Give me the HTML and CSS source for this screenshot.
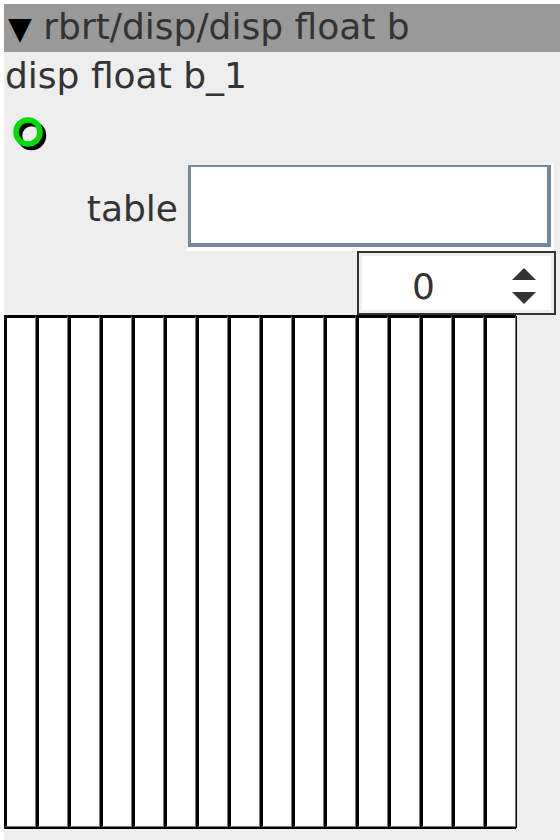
FILE: index.html
```html
<!DOCTYPE html>
<html lang="en">
<head>
    <meta charset="UTF-8">
    <meta name="viewport" content="width=device-width, initial-scale=1.0">
    <link rel="stylesheet" href="styles.css">
    <title>rbrt/disp/disp float b</title>
</head>
<body>
    <div class="panel">
        <div class="panel-head"><span class="arrow">&#9660;</span> rbrt/disp/disp float b</div>
        <div class="title">disp float b_1</div>

        <div class="status">
            <svg width="44" height="44" viewBox="0 0 44 44">
                <circle cx="18.5" cy="18.5" r="12" fill="none" stroke="#000" stroke-width="5.5"/>
                <circle cx="15" cy="15" r="12" fill="none" stroke="#00dd00" stroke-width="5.5"/>
            </svg>
        </div>

        <div class="field">
            <label for="table">table</label>
            <div class="field-box"><input type="text" id="table" name="table"></div>
        </div>

        <div class="spin-row">
            <div class="spin">
                <span class="spin-value">0</span>
                <span class="spin-arrows">
                    <span class="up"></span>
                    <span class="down"></span>
                </span>
            </div>
        </div>

        <div class="bars">
            <div class="bar"></div><div class="bar"></div><div class="bar"></div><div class="bar"></div>
            <div class="bar"></div><div class="bar"></div><div class="bar"></div><div class="bar"></div>
            <div class="bar"></div><div class="bar"></div><div class="bar"></div><div class="bar"></div>
            <div class="bar"></div><div class="bar"></div><div class="bar"></div><div class="bar"></div>
        </div>
    </div>
</body>
</html>
```

FILE: styles.css
```css
body {
    margin: 4px 0 0 4px;
    background: #fff;
    font-family: 'DejaVu Sans', Verdana, sans-serif;
    color: #333;
    overflow: hidden;
}

.panel {
    background: #eee;
    height: 840px;
    display: flex;
    flex-direction: column;
}

.panel-head {
    background: #999;
    height: 48px;
    line-height: 46px;
    font-size: 36px;
    padding-left: 4px;
    white-space: nowrap;
}

.arrow {
    color: #000;
    font-size: 31px;
}

.title {
    height: 48px;
    line-height: 48px;
    font-size: 36px;
    padding-left: 1px;
}

.status {
    height: 61px;
    padding: 17px 0 0 9px;
    box-sizing: border-box;
}

.field {
    display: flex;
    align-items: center;
    height: 90px;
}

.field label {
    width: 174px;
    text-align: right;
    font-size: 36px;
    padding-right: 10px;
    margin-top: 4px;
}

.field-box {
    border-right: 3px solid #fff;
    border-bottom: 4px solid #fff;
    border-top: 3px solid transparent;
    border-left: 3px solid transparent;
    margin-left: -3px;
}

.field-box input {
    display: block;
    width: 356px;
    height: 76px;
    box-sizing: content-box;
    padding: 0;
    margin: 0;
    border-style: solid;
    border-color: #778899;
    border-width: 2px 4px 4px 3px;
    background: #fff;
    outline: none;
}

.spin-row {
    display: flex;
    justify-content: flex-end;
    padding-right: 4px;
}

.spin {
    width: 195px;
    height: 60px;
    border: 2px solid #333;
    background: #fff;
    box-shadow: inset 0 0 0 3px #eee;
    display: flex;
    align-items: center;
}

.spin-value {
    flex: 1;
    text-align: center;
    font-size: 36px;
    padding-right: 24px;
    margin-top: 6px;
}

.spin-arrows {
    display: flex;
    flex-direction: column;
    gap: 12px;
    width: 26px;
    margin-right: 16px;
    margin-top: 6px;
}

.up {
    width: 0;
    height: 0;
    border-left: 12px solid transparent;
    border-right: 12px solid transparent;
    border-bottom: 12px solid #333;
}

.down {
    width: 0;
    height: 0;
    border-left: 12px solid transparent;
    border-right: 12px solid transparent;
    border-top: 12px solid #333;
}

.bars {
    display: flex;
    width: 512px;
}

.bar {
    width: 32px;
    height: 512px;
    box-sizing: border-box;
    background: #fff;
    border-left: 3px solid #000;
    border-top: 3px solid #000;
    border-right: 1px solid #777;
    border-bottom: 1px solid #777;
    box-shadow: 1px 1px 0 #000, 0 2px 0 #000;
}
```
